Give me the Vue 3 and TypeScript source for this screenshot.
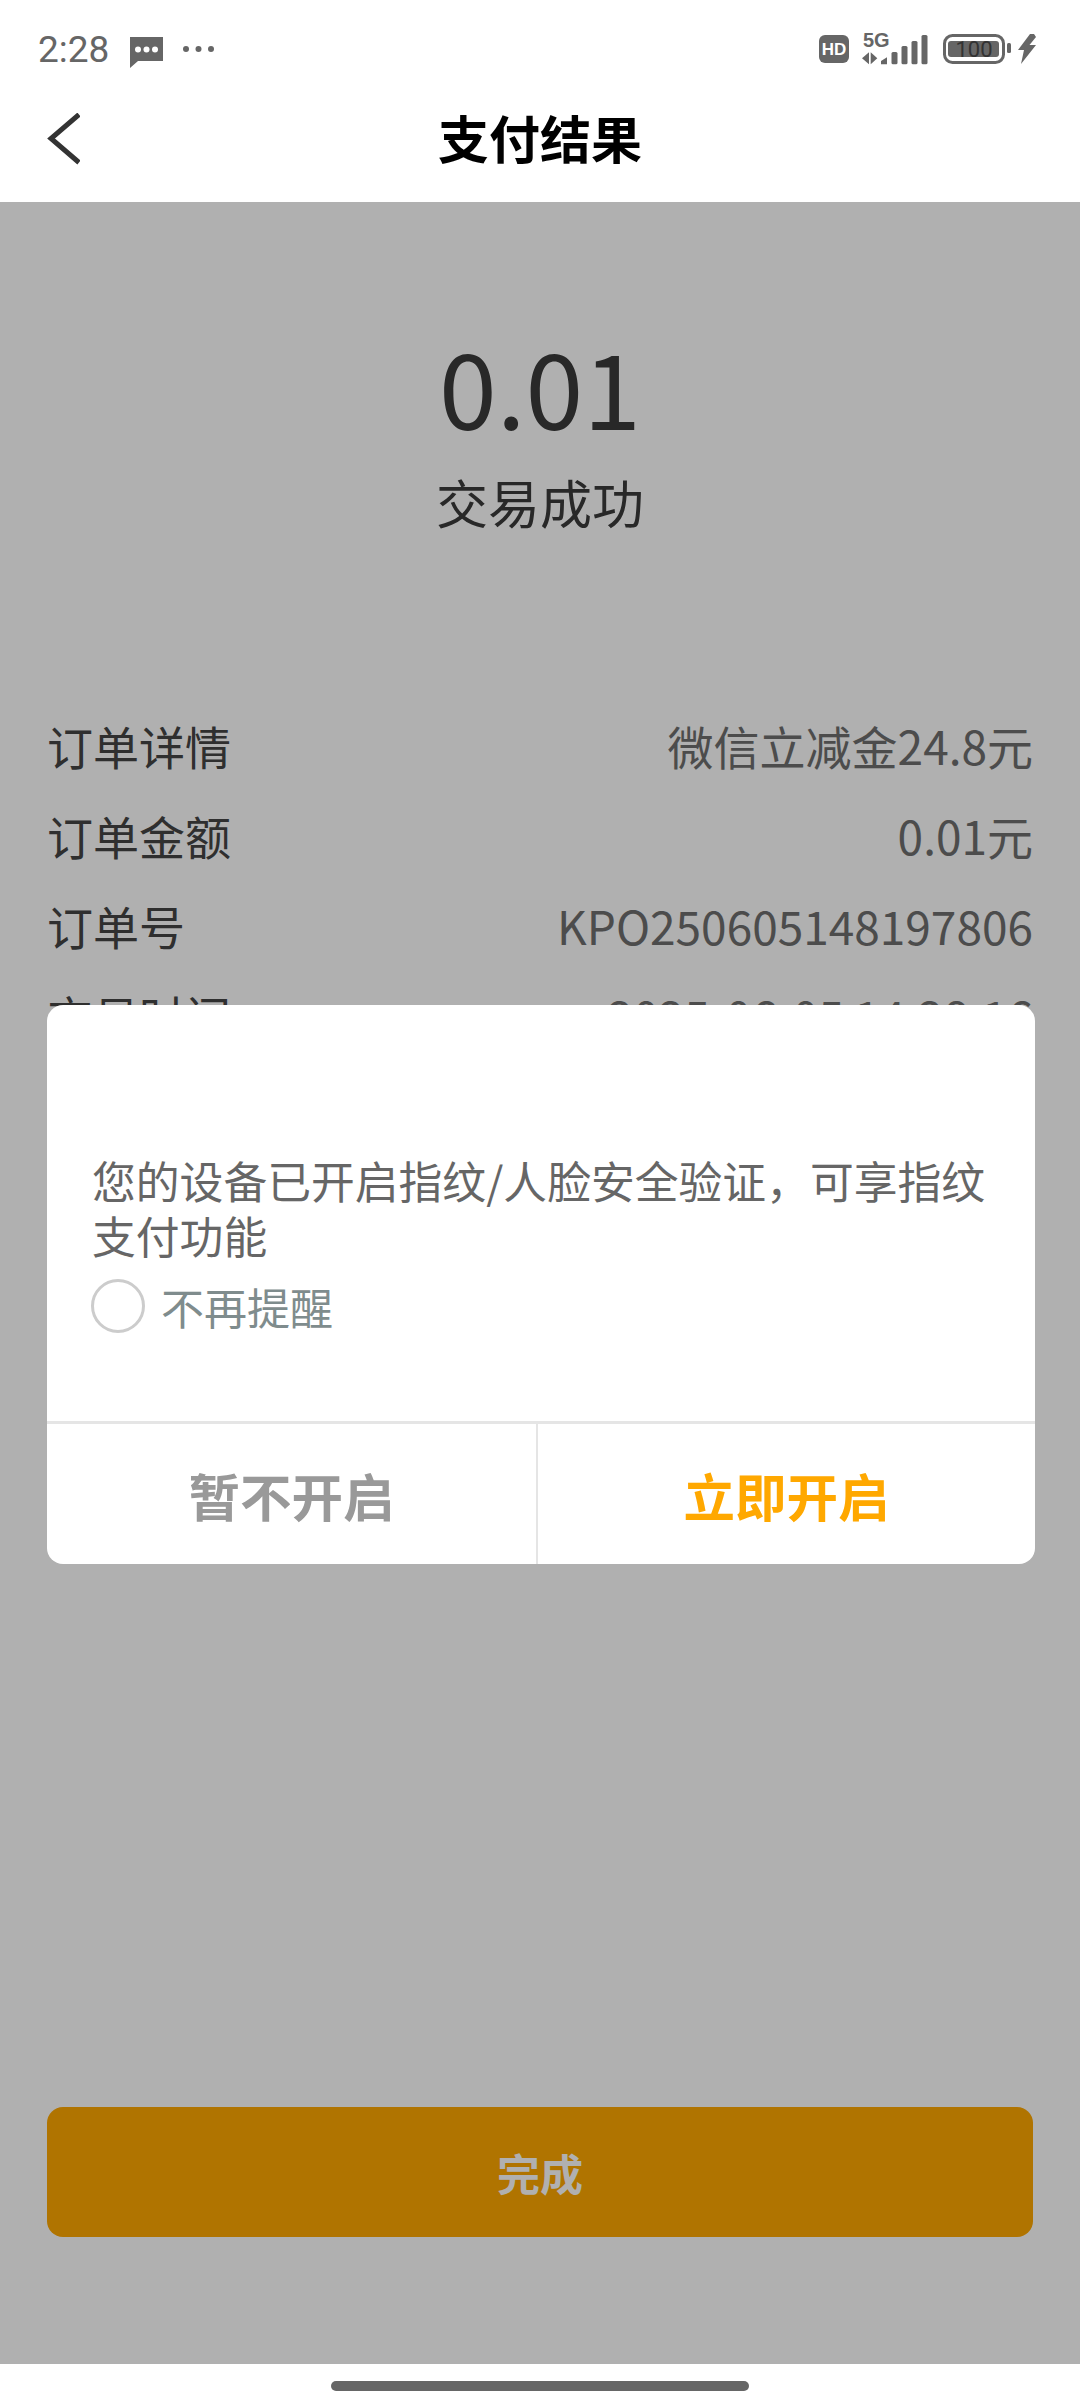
<script setup lang="ts">
interface Row {
  label: string;
  value: string;
}

const rows: Row[] = [
  { label: '订单详情', value: '微信立减金24.8元' },
  { label: '订单金额', value: '0.01元' },
  { label: '订单号', value: 'KPO250605148197806' },
  { label: '交易时间', value: '2025-06-05 14:28:16' },
];
</script>

<template>
  <div class="page">
    <div class="status-bar">
      <div class="status-left">
        <span class="time">2:28</span>
        <svg class="msg-icon" width="33" height="31" viewBox="0 0 33 31">
          <path d="M0 0h33v24H8l-8 7z" fill="#666" />
          <circle cx="8" cy="12.500" r="3" fill="#fff" />
          <circle cx="16.500" cy="12.500" r="3" fill="#fff" />
          <circle cx="25" cy="12.500" r="3" fill="#fff" />
        </svg>
        <svg class="more-icon" width="32" height="8" viewBox="0 0 32 8">
          <circle cx="4" cy="4" r="3" fill="#666" />
          <circle cx="16.500" cy="4" r="3" fill="#666" />
          <circle cx="29" cy="4" r="3" fill="#666" />
        </svg>
      </div>
      <svg class="status-right" width="222" height="40" viewBox="0 0 222 40">
        <rect x="0" y="6" width="30" height="28" rx="6" fill="#666" />
        <text x="15" y="26" class="hd">HD</text>
        <text x="44" y="18" class="five-g">5G</text>
        <path d="M50 23.300v12l-7-6zM51.700 23.300v12l6.600-6z" fill="#666" />
        <path d="M62 32l6-3.700v7h-6z" fill="#666" />
        <rect x="72.500" y="23" width="6" height="12.300" rx="1.500" fill="#666" />
        <rect x="82.500" y="17" width="6" height="18.300" rx="1.500" fill="#666" />
        <rect x="92.500" y="12" width="6" height="23.300" rx="1.500" fill="#666" />
        <rect x="102.500" y="6" width="6" height="29.300" rx="1.500" fill="#666" />
        <rect x="125.500" y="6.500" width="59" height="27" rx="8" fill="none" stroke="#666" stroke-width="3" />
        <rect x="129" y="12" width="51" height="16" rx="3" fill="#666" />
        <text x="155" y="28" class="batt">100</text>
        <rect x="188" y="14" width="4" height="10" rx="1.500" fill="#666" />
        <path d="M211 5l-12 16h6l-3 14 15-19h-6.500l6.500-8-2-3z" fill="#666" />
      </svg>
    </div>

    <header class="nav-bar">
      <svg class="back" width="34" height="52" viewBox="0 0 34 52">
        <path d="M33 1.500L5 25.500l28 24" fill="none" stroke="#333" stroke-width="5" />
      </svg>
      <h1 class="nav-title">支付结果</h1>
    </header>

    <main class="content">
      <section class="result">
        <div class="amount">0.01</div>
        <div class="state">交易成功</div>
      </section>

      <section class="details">
        <div v-for="row in rows" :key="row.label" class="row">
          <span class="row-label">{{ row.label }}</span>
          <span class="row-value">{{ row.value }}</span>
        </div>
      </section>

      <button type="button" class="done">完成</button>

      <div class="overlay">
        <div class="dialog">
          <div class="dialog-body">
            <p class="dialog-message">您的设备已开启指纹/人脸安全验证，可享指纹支付功能</p>
            <label class="remind">
              <span class="radio"></span>
              <span>不再提醒</span>
            </label>
          </div>
          <div class="dialog-actions">
            <button type="button" class="action action-cancel">暂不开启</button>
            <button type="button" class="action action-confirm">立即开启</button>
          </div>
        </div>
      </div>
    </main>

    <div class="home-area">
      <div class="home-bar"></div>
    </div>
  </div>
</template>

<style>
html,
body {
  margin: 0;
  background: #fff;
}
</style>

<style scoped>
.page {
  width: 1080px;
  height: 2408px;
  display: flex;
  flex-direction: column;
  overflow: hidden;
  background: #fff;
  font-family: "Noto Sans CJK SC", "Noto Sans", sans-serif;
}

.status-bar {
  height: 98px;
  flex-shrink: 0;
  display: flex;
  align-items: center;
  justify-content: space-between;
  padding: 0 39px 0 38px;
  box-sizing: border-box;
}

.status-left {
  display: flex;
  align-items: center;
}

.time {
  font-family: Roboto, sans-serif;
  font-size: 37px;
  color: #666;
}

.msg-icon {
  margin-left: 21px;
  margin-top: 6px;
}

.more-icon {
  margin-left: 19px;
}

.hd {
  font-family: "Liberation Sans", sans-serif;
  font-size: 17px;
  font-weight: 700;
  fill: #fff;
  text-anchor: middle;
}

.five-g {
  font-family: "Liberation Sans", sans-serif;
  font-size: 20px;
  font-weight: 700;
  fill: #666;
}

.batt {
  font-family: Roboto, sans-serif;
  font-size: 22px;
  fill: #333;
  text-anchor: middle;
}

.nav-bar {
  height: 104px;
  flex-shrink: 0;
  display: flex;
  justify-content: center;
  position: relative;
}

.back {
  position: absolute;
  left: 46px;
  top: 15px;
}

.nav-title {
  margin: 0;
  padding-top: 3px;
  font-size: 51px;
  font-weight: 700;
  color: #000;
  line-height: 72px;
}

.content {
  position: relative;
  height: 2162px;
  flex-shrink: 0;
  display: flex;
  flex-direction: column;
  padding: 0 47px;
  box-sizing: border-box;
}

.result {
  display: flex;
  flex-direction: column;
  align-items: center;
  padding-top: 118px;
  color: #3a3a3a;
}

.amount {
  font-size: 104px;
  line-height: 130px;
}

.state {
  font-size: 52px;
  line-height: 74px;
  margin-top: 15px;
}

.details {
  margin-top: 161px;
  display: flex;
  flex-direction: column;
}

.row {
  height: 90px;
  display: flex;
  align-items: center;
  justify-content: space-between;
  font-size: 46px;
}

.row-label {
  color: #444;
}

.row-value {
  color: #6e6e6e;
}

.done {
  margin-top: auto;
  margin-bottom: 127px;
  height: 130px;
  border: none;
  border-radius: 16px;
  background: #ffa800;
  color: #fff;
  font-family: inherit;
  font-size: 43px;
  font-weight: 700;
  padding: 0;
}

.overlay {
  position: absolute;
  inset: 0;
  background: rgba(0, 0, 0, 0.31);
  display: flex;
  padding: 803px 0 0 47px;
  box-sizing: border-box;
}

.dialog {
  width: 988px;
  height: 559px;
  background: #fff;
  border-radius: 16px;
  display: flex;
  flex-direction: column;
  overflow: hidden;
}

.dialog-body {
  flex: 1;
  padding: 148px 30px 0 45px;
}

.dialog-message {
  margin: 0;
  font-size: 43.800px;
  line-height: 55px;
  color: #666;
}

.remind {
  display: flex;
  align-items: center;
  gap: 16px;
  margin-top: 15px;
  margin-left: -1px;
  font-size: 43px;
  line-height: 56px;
  color: #7f8c8d;
}

.radio {
  width: 48px;
  height: 48px;
  border: 3px solid #ccc;
  border-radius: 50%;
  flex-shrink: 0;
}

.dialog-actions {
  height: 140px;
  flex-shrink: 0;
  display: flex;
  border-top: 3px solid #e5e5e5;
}

.action {
  border: none;
  background: none;
  font-family: inherit;
  font-size: 51.500px;
  font-weight: 700;
  padding: 0;
}

.action-cancel {
  width: 491px;
  color: #999;
  border-right: 2px solid #e5e5e5;
}

.action-confirm {
  flex: 1;
  color: #ffa800;
}

.home-area {
  flex: 1;
  display: flex;
  justify-content: center;
  padding-top: 17px;
}

.home-bar {
  width: 418px;
  height: 10px;
  border-radius: 5px;
  background: #666;
}
</style>
